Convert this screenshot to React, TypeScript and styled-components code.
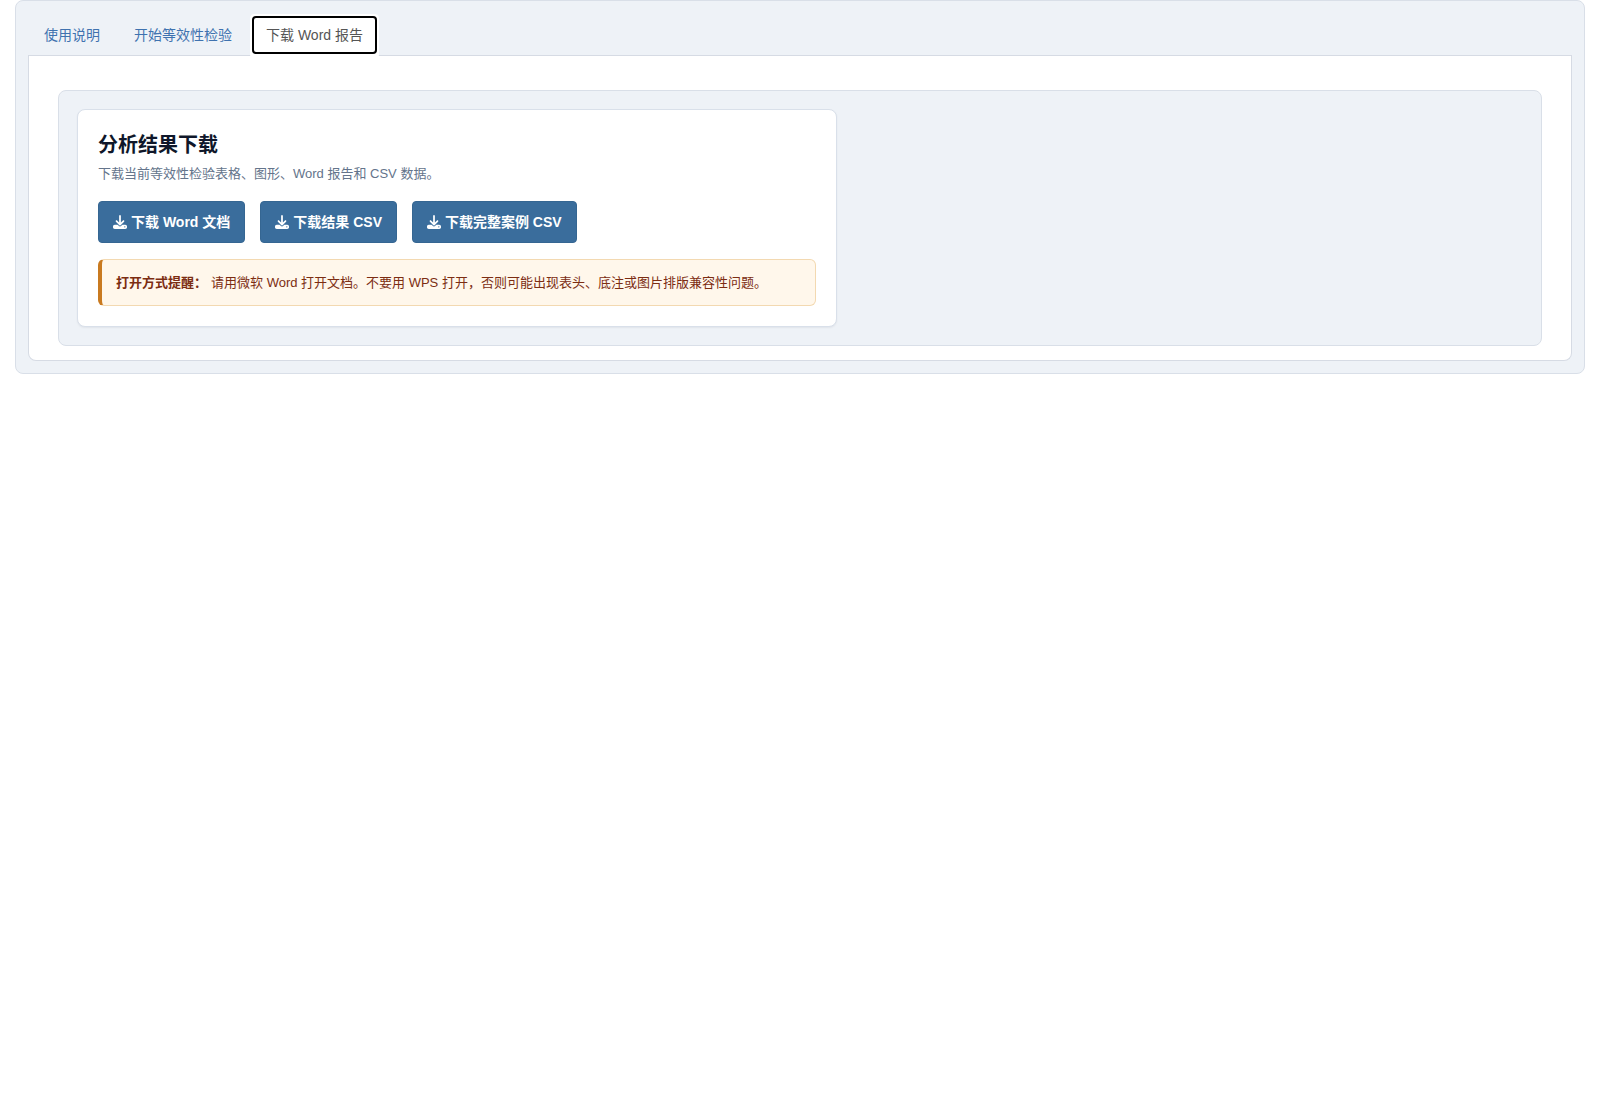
import React, { useState } from "react";
import styled, { createGlobalStyle, css } from "styled-components";
import { FaDownload } from "react-icons/fa6";

const GlobalStyle = createGlobalStyle`
  *, *::before, *::after { box-sizing: border-box; }
  body {
    margin: 0;
    background: #fff;
    color: #333;
    font: 14px/20px "Liberation Sans", "Noto Sans CJK SC", sans-serif;
  }
`;

const Page = styled.div`
  padding: 0 15px;
`;

const Shell = styled.main`
  padding: 13px 12px 12px;
  border: 1px solid #d9dfe8;
  border-radius: 8px;
  background: #eef2f7;
`;

const TabBar = styled.nav`
  display: flex;
  gap: 2px;
  border-bottom: 1px solid #d6dbe4;
`;

const Tab = styled.a<{ $active: boolean }>`
  position: relative;
  margin-bottom: -1px;
  padding: 10px 15px;
  border: 1px solid transparent;
  border-radius: 4px 4px 0 0;
  color: #3f72af;
  text-decoration: none;
  white-space: nowrap;
  ${({ $active }) =>
    $active &&
    css`
      border-color: #fff;
      background: #fff;
      color: #555;

      &::after {
        content: "";
        position: absolute;
        inset: 1px;
        border: 2px solid #000;
        border-radius: 4px;
      }
    `}
`;

const TabContent = styled.section`
  padding: 34px 29px 14px;
  border: 1px solid #d6dbe4;
  border-top: 0;
  border-radius: 0 0 8px 8px;
  background: #fff;
`;

const Well = styled.div`
  padding: 18px;
  border: 1px solid #d9dfe8;
  border-radius: 8px;
  background: #eef2f7;
`;

const Card = styled.article`
  max-width: 760px;
  padding: 20px;
  border: 1px solid #d9e0ea;
  border-radius: 8px;
  background: #fff;
  box-shadow: 0 1px 2px rgba(15, 23, 42, 0.06);
`;

const Title = styled.h1`
  margin: 0 0 4px;
  color: #0f172a;
  font-size: 20px;
  font-weight: 700;
  line-height: 30px;
`;

const Lead = styled.p`
  margin: 0 0 17px;
  color: #64748b;
  font-size: 13px;
`;

const Actions = styled.div`
  display: flex;
  flex-wrap: wrap;
  gap: 15px;
`;

const DownloadButton = styled.button`
  display: inline-flex;
  align-items: center;
  gap: 4px;
  padding: 10px 14px;
  border: 1px solid #356692;
  border-radius: 4px;
  background: #3a6d9c;
  color: #fff;
  font: inherit;
  font-weight: 700;
  cursor: pointer;
`;

const Notice = styled.p`
  margin: 16px 0 0;
  padding: 12px 14px;
  border: 1px solid #f3d9b1;
  border-left: 4px solid #c97a20;
  border-radius: 6px;
  background: #fff7eb;
  color: #7c2d12;
  font-size: 13px;
  line-height: 21px;
`;

const NoticeLabel = styled.strong`
  margin-right: 4px;
`;

const tabs = ["使用说明", "开始等效性检验", "下载 Word 报告"];
const downloads = ["下载 Word 文档", "下载结果 CSV", "下载完整案例 CSV"];

export default function App() {
  const [active, setActive] = useState(2);
  return (
    <Page>
      <GlobalStyle />
      <Shell>
        <TabBar>
          {tabs.map((label, i) => (
            <Tab
              key={label}
              href="#report"
              $active={i === active}
              aria-current={i === active ? "page" : undefined}
              onClick={() => setActive(i)}
            >
              {label}
            </Tab>
          ))}
        </TabBar>
        <TabContent id="report">
          <Well>
            <Card>
              <Title>分析结果下载</Title>
              <Lead>下载当前等效性检验表格、图形、Word 报告和 CSV 数据。</Lead>
              <Actions>
                {downloads.map((label) => (
                  <DownloadButton key={label} type="button">
                    <FaDownload size={14} aria-hidden="true" />
                    {label}
                  </DownloadButton>
                ))}
              </Actions>
              <Notice>
                <NoticeLabel>打开方式提醒：</NoticeLabel>
                请用微软 Word 打开文档。不要用 WPS 打开，否则可能出现表头、底注或图片排版兼容性问题。
              </Notice>
            </Card>
          </Well>
        </TabContent>
      </Shell>
    </Page>
  );
}
